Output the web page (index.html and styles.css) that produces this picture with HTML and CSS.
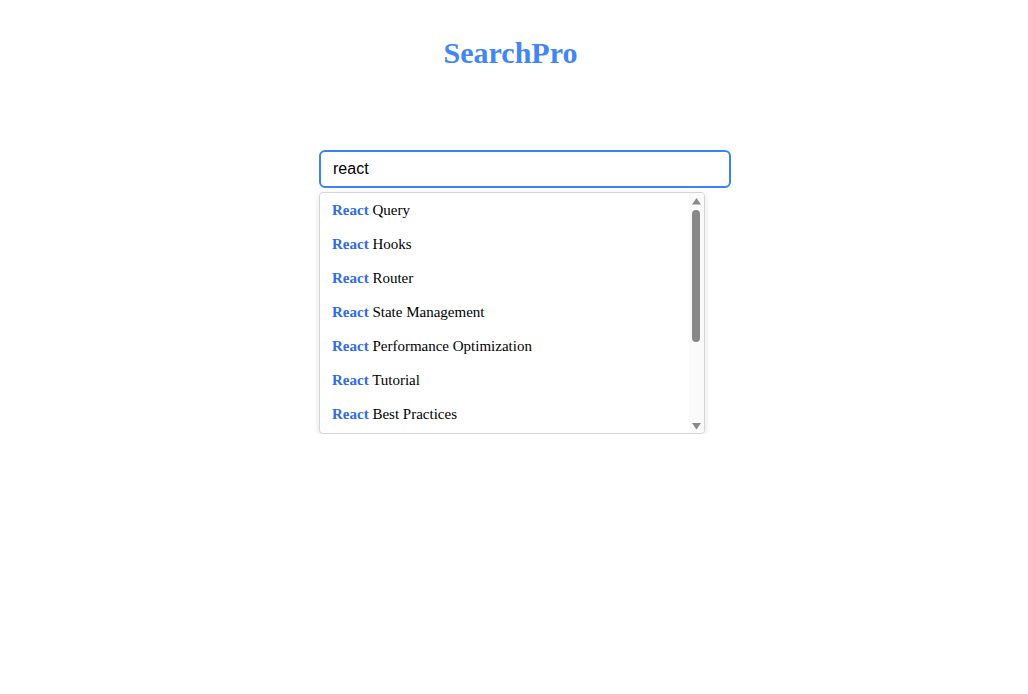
FILE: index.html
```html
<!DOCTYPE html>
<html>
<head>
<meta charset="utf-8">
<link rel="stylesheet" href="styles.css">
</head>
<body>
<header class="header"><h1 class="title">SearchPro</h1></header>
<main class="search">
  <input class="search-input" type="text" value="react">
  <div class="dropdown">
    <ul class="suggestions">
      <li class="item"><strong class="match">React</strong> Query</li>
      <li class="item"><strong class="match">React</strong> Hooks</li>
      <li class="item"><strong class="match">React</strong> Router</li>
      <li class="item"><strong class="match">React</strong> State Management</li>
      <li class="item"><strong class="match">React</strong> Performance Optimization</li>
      <li class="item"><strong class="match">React</strong> Tutorial</li>
      <li class="item"><strong class="match">React</strong> Best Practices</li>
    </ul>
    <div class="scrollbar" aria-hidden="true">
      <div class="scroll-btn">
        <svg width="15" height="15" viewBox="0 0 15 15"><polygon points="3,11.5 12,11.5 7.5,5" fill="#8a8a8a"/></svg>
      </div>
      <div class="track"><div class="thumb"></div></div>
      <div class="scroll-btn">
        <svg width="15" height="15" viewBox="0 0 15 15"><polygon points="3,5 12,5 7.5,11.5" fill="#8a8a8a"/></svg>
      </div>
    </div>
  </div>
</main>
</body>
</html>
```
FILE: styles.css
```css
html, body {
  margin: 0;
  padding: 0;
  background: #ffffff;
}
body {
  font-family: "Liberation Serif", "Times New Roman", serif;
}
.header {
  display: flex;
  justify-content: center;
  padding-top: 35px;
  padding-right: 7px;
}
.title {
  margin: 0;
  font-size: 30px;
  line-height: 36px;
  font-weight: bold;
  color: #4285f4;
}
.search {
  display: flex;
  flex-direction: column;
  align-items: flex-start;
  padding-left: 319px;
  margin-top: 79px;
}
.search-input {
  box-sizing: border-box;
  width: 412px;
  height: 38px;
  margin: 0;
  padding: 0 12px;
  border: 2px solid #3b82f6;
  border-radius: 6px;
  font-family: "Liberation Sans", Arial, sans-serif;
  font-size: 16px;
  color: #000;
  outline: none;
}
.dropdown {
  box-sizing: border-box;
  display: flex;
  margin-top: 4px;
  width: 386px;
  height: 242px;
  border: 1px solid #d4d4dc;
  border-radius: 4px;
  background: #fff;
  box-shadow: 0 2px 6px rgba(0,0,0,0.12);
  overflow: hidden;
}
.suggestions {
  list-style: none;
  margin: 0;
  padding: 0;
  flex: 1;
  overflow: hidden;
}
.scrollbar {
  width: 15px;
  flex: none;
  display: flex;
  flex-direction: column;
  background: #fafafa;
}
.scroll-btn {
  height: 15px;
  flex: none;
}
.scroll-btn svg {
  display: block;
}
.track {
  flex: 1;
  padding: 2px 4px 0 3px;
}
.thumb {
  height: 132px;
  background: #888888;
  border-radius: 4px;
}
.item {
  height: 34px;
  display: flex;
  align-items: center;
  padding: 0 12px;
  font-size: 15px;
  color: #000;
  white-space: pre;
}
.match {
  color: #2f6ae8;
  font-weight: bold;
}
```
